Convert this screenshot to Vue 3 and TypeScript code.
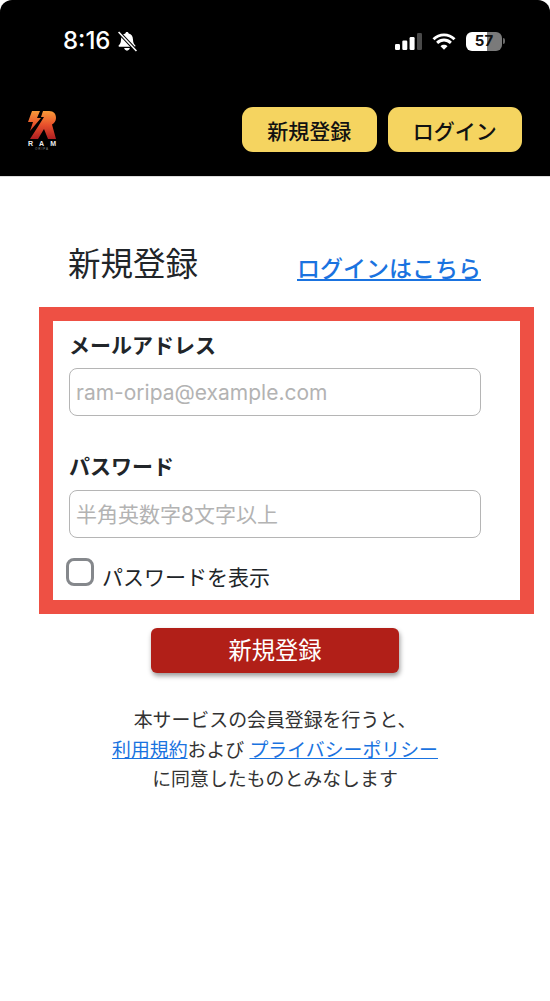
<script setup lang="ts">
import { ref } from 'vue'

const email = ref<string>('')
const password = ref<string>('')
const show = ref<boolean>(false)
</script>

<template>
  <div class="page">
    <header class="top">
      <div class="status">
        <div class="status-left">
          <span class="time">8:16</span>
          <svg class="bell" width="20" height="21" viewBox="0 0 19 20">
            <path d="M9.500 1c.9 0 1.500.6 1.600 1.400 2.700.7 4 2.800 4.100 5.600.1 2.800.7 4.100 2.100 5.500.6.600.1 1.600-.8 1.600H2.500c-.9 0-1.400-1-.8-1.600 1.400-1.400 2-2.700 2.100-5.500.1-2.800 1.400-4.900 4.100-5.600C8 1.600 8.600 1 9.500 1z" fill="#fff"/>
            <path d="M6.800 16.300h5.400c-.2 1.400-1.300 2.400-2.700 2.400s-2.500-1-2.700-2.400z" fill="#fff"/>
            <path d="M1.500 1 18.500 19" stroke="#000" stroke-width="3.400"/>
            <path d="M1.500 1 18.500 19" stroke="#fff" stroke-width="1.500"/>
          </svg>
        </div>
        <div class="status-right">
          <svg width="27" height="17" viewBox="0 0 27 17">
            <rect x="0" y="11" width="5" height="6" rx="1.200" fill="#fff"/>
            <rect x="7.300" y="7.500" width="5" height="9.500" rx="1.200" fill="#fff"/>
            <rect x="14.600" y="4" width="5" height="13" rx="1.200" fill="#fff"/>
            <rect x="22" y="0" width="5" height="17" rx="1.200" fill="#4a4a4a"/>
          </svg>
          <svg class="wifi" width="24" height="17" viewBox="0 0 24 17">
            <path d="M1.500 6.300C4.300 3.500 8 1.900 12 1.900s7.700 1.600 10.500 4.400M5.100 9.900C7 8.100 9.400 7 12 7s5 1.100 6.900 2.900" fill="none" stroke="#fff" stroke-width="2.900"/>
            <path d="M8.500 13.200C9.500 12.300 10.700 11.800 12 11.800s2.500.5 3.500 1.400L12 16.800z" fill="#fff"/>
          </svg>
          <div class="battery">
            <div class="battery-body"><span class="battery-num">57</span></div>
            <span class="battery-tip"></span>
          </div>
        </div>
      </div>
      <div class="nav">
        <div class="logo">
          <svg width="30" height="30" viewBox="0 0 30 30">
            <defs>
              <linearGradient id="logoGrad" gradientUnits="userSpaceOnUse" x1="0" y1="0" x2="0" y2="30">
                <stop offset="0" stop-color="#f9a13a"/>
                <stop offset="0.5" stop-color="#e8502c"/>
                <stop offset="1" stop-color="#a81a20"/>
              </linearGradient>
            </defs>
            <path d="M5 1h8L10 8h4L3 21l3-9H1z" fill="url(#logoGrad)"/>
            <path d="M16 1h6c5 0 7 3 7 7 0 3-2 5.500-4 6.500L29 29h-8l-4-10-6 10H3l9-14 5-8h-3z" fill="url(#logoGrad)"/>
          </svg>
          <span class="logo-ram">RAM</span>
          <span class="logo-oripa">ORIPA</span>
        </div>
        <div class="nav-buttons">
          <button class="nav-btn" type="button">新規登録</button>
          <button class="nav-btn" type="button">ログイン</button>
        </div>
      </div>
    </header>

    <main class="main">
      <div class="title-row">
        <h1 class="title">新規登録</h1>
        <a class="login-link" href="#">ログインはこちら</a>
      </div>

      <form class="form" @submit.prevent>
        <label class="label" for="email">メールアドレス</label>
        <input id="email" v-model="email" class="input" type="email" placeholder="ram-oripa@example.com" />
        <label class="label label-second" for="password">パスワード</label>
        <input id="password" v-model="password" class="input" :type="show ? 'text' : 'password'" placeholder="半角英数字8文字以上" />
        <label class="check-row">
          <input v-model="show" class="check" type="checkbox" />
          <span>パスワードを表示</span>
        </label>
      </form>

      <button class="submit" type="button">新規登録</button>

      <p class="terms">
        本サービスの会員登録を行うと、<br />
        <a href="#">利用規約</a>および <a href="#">プライバシーポリシー</a><br />
        に同意したものとみなします
      </p>
    </main>
  </div>
</template>

<style>
html, body { margin: 0; background: #fff; }
</style>

<style scoped>
.page {
  width: 550px;
  height: 1001px;
  overflow: hidden;
  background: #fff;
  color: #212529;
  font-family: "Liberation Sans", "Noto Sans CJK JP", sans-serif;
}
.top {
  height: 177px;
  box-sizing: border-box;
  background: #000;
  border-radius: 12px 12px 0 0;
  border-bottom: 1px solid #ddd;
  padding: 29px 28px 0 27px;
  display: flex;
  flex-direction: column;
}
.status {
  display: flex;
  justify-content: space-between;
  align-items: center;
  height: 24px;
  padding: 0 17px 0 36px;
}
.status-left { display: flex; align-items: center; gap: 7px; }
.time {
  color: #fff;
  font-family: Inter, sans-serif;
  font-size: 24px;
  font-weight: 500;
  line-height: 24px;
}
.status-right { display: flex; align-items: center; gap: 10px; }
.battery { display: flex; align-items: center; gap: 1px; }
.battery-body {
  width: 36px;
  height: 19px;
  border-radius: 6px;
  background: linear-gradient(90deg, #fff 0 57%, #7a7a7a 57% 100%);
  display: flex;
  align-items: center;
  justify-content: center;
}
.battery-num {
  color: #111;
  font-family: Inter, sans-serif;
  font-size: 15px;
  font-weight: 700;
  line-height: 18px;
}
.battery-tip {
  width: 2px;
  height: 6px;
  border-radius: 0 2px 2px 0;
  background: #6a6a6a;
}
.nav {
  margin-top: 54px;
  display: flex;
  justify-content: space-between;
  align-items: flex-start;
}
.logo {
  width: 30px;
  margin-top: 3px;
  display: flex;
  flex-direction: column;
  align-items: center;
  color: #eee;
}
.logo svg { display: block; }
.logo-ram {
  font-size: 7px;
  line-height: 7px;
  font-weight: 700;
  letter-spacing: 6px;
  margin-right: -6px;
  white-space: nowrap;
}
.logo-oripa {
  font-size: 3px;
  line-height: 4px;
  letter-spacing: 1px;
  color: #888;
}
.nav-buttons { display: flex; gap: 11px; }
.nav-btn {
  width: 134.500px;
  height: 45px;
  padding: 0;
  border: 0;
  border-radius: 11px;
  background: #f5d460;
  color: #111;
  font-family: inherit;
  font-size: 21px;
  font-weight: 500;
}
.main {
  padding: 0 16px 0 39px;
}
.title-row {
  height: 130px;
  box-sizing: border-box;
  padding: 0 53px 0 29px;
  display: flex;
  justify-content: space-between;
  align-items: flex-start;
}
.title {
  margin: 66px 0 0;
  font-size: 32.500px;
  line-height: 44px;
  font-weight: 400;
}
.login-link {
  margin-top: 75px;
  font-size: 23px;
  line-height: 34px;
  font-weight: 500;
  color: #1a73e0;
}
.form {
  box-sizing: border-box;
  height: 307px;
  border: 14px solid #ee5044;
  padding: 9px 39px 0 16px;
  display: flex;
  flex-direction: column;
}
.label {
  font-size: 21px;
  line-height: 32px;
  font-weight: 700;
}
.label-second { margin-top: 35px; }
.input {
  box-sizing: border-box;
  width: 412px;
  height: 48px;
  margin-top: 6px;
  padding: 0 6px;
  border: 1.500px solid #b5b5b5;
  border-radius: 8px;
  background: #fff;
  font-family: Inter, "Noto Sans CJK JP", sans-serif;
  font-size: 21px;
  outline: none;
}
.label-second + .input { margin-top: 7px; }
.input::placeholder { color: #b3b3b3; opacity: 1; }
.check-row {
  margin: 20px 0 0 -3px;
  display: flex;
  align-items: flex-start;
  gap: 8px;
  font-size: 21px;
  line-height: 28px;
}
.check-row span { margin-top: 6px; }
.check {
  appearance: none;
  -webkit-appearance: none;
  box-sizing: border-box;
  width: 28px;
  height: 28px;
  margin: 0;
  border: 3px solid #85888c;
  border-radius: 8px;
  background: #fff;
}
.submit {
  display: block;
  width: 248px;
  height: 45px;
  margin: 14px 0 0 112px;
  padding: 0 0 3px;
  border: 0;
  border-radius: 6px;
  background: #b11f18;
  color: #fff;
  font-family: inherit;
  font-size: 23.300px;
  box-shadow: 1px 3px 5px rgba(0, 0, 0, 0.4);
}
.terms {
  margin: 33px 0 0;
  width: 472px;
  text-align: center;
  font-size: 18.900px;
  line-height: 29.500px;
  color: #333;
}
.terms a { color: #1a73e0; }
</style>
